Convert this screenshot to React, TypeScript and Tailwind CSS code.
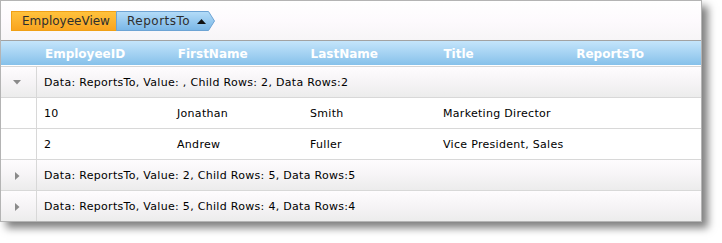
import React from 'react';

type Row =
  | { kind: 'group'; text: string; open: boolean }
  | { kind: 'data'; cells: string[] };

const rows: Row[] = [
  { kind: 'group', text: 'Data: ReportsTo, Value: , Child Rows: 2, Data Rows:2', open: true },
  { kind: 'data', cells: ['10', 'Jonathan', 'Smith', 'Marketing Director', ''] },
  { kind: 'data', cells: ['2', 'Andrew', 'Fuller', 'Vice President, Sales', ''] },
  { kind: 'group', text: 'Data: ReportsTo, Value: 2, Child Rows: 5, Data Rows:5', open: false },
  { kind: 'group', text: 'Data: ReportsTo, Value: 5, Child Rows: 4, Data Rows:4', open: false },
];

const columns = ['EmployeeID', 'FirstName', 'LastName', 'Title', 'ReportsTo'];

function ExpandArrow({ open }: { open: boolean }) {
  return open ? (
    <svg width="8" height="5" viewBox="0 0 8 5">
      <path d="M0 0 L8 0 L4 4.5 Z" fill="#8a8a8a" />
    </svg>
  ) : (
    <svg width="5" height="8" viewBox="0 0 5 8">
      <path d="M0 0 L4.5 4 L0 8 Z" fill="#8a8a8a" />
    </svg>
  );
}

export default function App() {
  return (
    <div className="w-[722px] h-[243px] bg-white" style={{ fontFamily: '"DejaVu Sans", Verdana, sans-serif' }}>
      <div className="w-[702px] border border-[#b4b4b4] bg-white shadow-[6px_6px_8px_rgba(0,0,0,0.5)]">
        {/* group by area */}
        <div className="h-[39px] bg-gradient-to-b from-white via-[#fdfafd] to-[#f7f5f7] pt-[10px] pl-[10px] flex">
          <div className="h-[20px] w-[106px] border border-[#f0a015] bg-gradient-to-b from-[#ffc23c] to-[#f9a41e] text-[12px] text-[#2e2e2e] flex items-center pl-[10px]">
            EmployeeView
          </div>
          <div className="relative h-[20px] w-[99px] -ml-px">
            <svg className="absolute inset-0" width="99" height="20" viewBox="0 0 99 20">
              <defs>
                <linearGradient id="chipBlue" x1="0" y1="0" x2="0" y2="1">
                  <stop offset="0" stopColor="#b4dcf8" />
                  <stop offset="1" stopColor="#79b6e6" />
                </linearGradient>
              </defs>
              <path d="M0.5 0.5 L92.5 0.5 L98.5 10 L92.5 19.5 L0.5 19.5 Z" fill="url(#chipBlue)" stroke="#6ea4d4" />
            </svg>
            <div className="relative h-full flex items-center pl-[11px] gap-[7px] text-[12px] tracking-[0.5px] text-[#2e2e2e]">
              ReportsTo
              <svg width="9" height="5" viewBox="0 0 9 5">
                <path d="M0 5 L4.5 0 L9 5 Z" fill="#111" />
              </svg>
            </div>
          </div>
        </div>
        {/* header */}
        <div className="border-t border-[#a2a2a2] h-[25px] bg-gradient-to-b from-[#c4e5fb] to-[#86c1ea] flex items-center pt-px">
          <div className="w-[36px]" />
          {columns.map((c) => (
            <div key={c} className="w-[133px] pl-[8px] text-[12px] font-bold text-white">
              {c}
            </div>
          ))}
        </div>
        <div className="h-px bg-white" />
        <div className="h-px bg-[#d6d6d6]" />
        {/* rows */}
        {rows.map((r, i) => {
          const last = i === rows.length - 1;
          return (
            <div
              key={i}
              className={`flex ${last ? 'h-[30px]' : 'h-[31px] border-b border-[#d8d8d8]'} ${
                r.kind === 'group' ? 'bg-gradient-to-b from-[#fefcfe] via-[#f6f4f6] to-[#ececec]' : 'bg-white'
              }`}
            >
              <div className="w-[36px] border-r border-[#d8d8d8] flex items-center justify-center pr-[3px] pt-px">
                {r.kind === 'group' && <ExpandArrow open={r.open} />}
              </div>
              {r.kind === 'group' ? (
                <div className="flex items-center pl-[7px] pt-[2px] text-[11px] tracking-[0.3px] text-black">{r.text}</div>
              ) : (
                r.cells.map((c, j) => (
                  <div
                    key={j}
                    className={`flex items-center pt-[2px] text-[11px] tracking-[0.3px] text-black ${j === 0 ? 'w-[132px] pl-[7px]' : 'w-[133px] pl-[8px]'}`}
                  >
                    {c}
                  </div>
                ))
              )}
            </div>
          );
        })}
      </div>
    </div>
  );
}
